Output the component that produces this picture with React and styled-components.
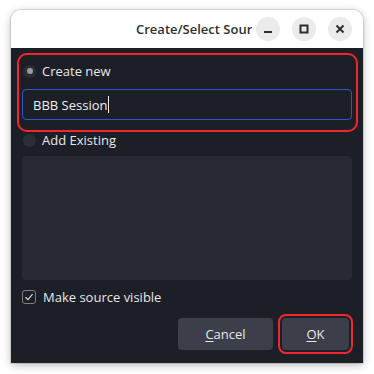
import React from "react";
import styled, { createGlobalStyle } from "styled-components";

const GlobalStyle = createGlobalStyle`
  html, body {
    margin: 0;
    padding: 0;
    background: #ffffff;
  }
  body {
    font-family: "Open Sans", "Noto Sans", sans-serif;
  }
`;

function Radio({ checked }) {
  return <RadioCircle>{checked && <RadioDot />}</RadioCircle>;
}

function App() {
  return (
    <Page>
      <GlobalStyle />
      <Window>
        <TitleBar>
          <Title>Create/Select Source</Title>
          <TitleButtons>
            <TitleButton>
              <svg width="10" height="10" viewBox="0 0 10 10">
                <rect x="1" y="7" width="8" height="2" fill="#2e2e2e" />
              </svg>
            </TitleButton>
            <TitleButton>
              <svg width="10" height="10" viewBox="0 0 10 10">
                <rect x="1.5" y="1.5" width="7" height="7" fill="none" stroke="#2e2e2e" strokeWidth="2" />
              </svg>
            </TitleButton>
            <TitleButton>
              <svg width="10" height="10" viewBox="0 0 10 10">
                <path d="M1.5 1.5 L8.5 8.5 M8.5 1.5 L1.5 8.5" stroke="#2e2e2e" strokeWidth="2" />
              </svg>
            </TitleButton>
          </TitleButtons>
        </TitleBar>
        <Content>
          <Highlight>
            <OptionRow>
              <Radio checked />
              <Label>Create new</Label>
            </OptionRow>
            <NameInput>
              BBB Session
              <Caret />
            </NameInput>
          </Highlight>
          <OptionRow>
            <Radio />
            <Label>Add Existing</Label>
          </OptionRow>
          <SourceList />
          <CheckRow>
            <CheckBox>
              <svg width="10" height="10" viewBox="0 0 10 10">
                <path d="M1.5 5.2 L4 7.6 L8.6 2.2" fill="none" stroke="#d8d9dc" strokeWidth="1.2" />
              </svg>
            </CheckBox>
            <Label>Make source visible</Label>
          </CheckRow>
          <ButtonRow>
            <Button $width={95}>
              <u>C</u>ancel
            </Button>
            <Button $width={67} $highlight>
              <u>O</u>K
            </Button>
          </ButtonRow>
        </Content>
      </Window>
    </Page>
  );
}

const Page = styled.div`
  width: 374px;
  height: 374px;
  padding: 10px 11px 0 11px;
  box-sizing: border-box;
`;

const Window = styled.div`
  width: 352px;
  height: 353px;
  border-radius: 10px 10px 0 0;
  overflow: hidden;
  display: flex;
  flex-direction: column;
  box-shadow: 0 0 0 1px rgba(0, 0, 0, 0.1), 0 2px 8px rgba(0, 0, 0, 0.28);
`;

const TitleBar = styled.div`
  height: 38px;
  flex-shrink: 0;
  background: #ffffff;
  display: flex;
  align-items: center;
  padding: 0 11px 0 125px;
  box-sizing: border-box;
`;

const Title = styled.div`
  flex: 1;
  min-width: 0;
  overflow: hidden;
  white-space: nowrap;
  font-size: 13px;
  font-weight: 600;
  color: #2e2e2e;
  margin-right: 4px;
`;

const TitleButtons = styled.div`
  display: flex;
  gap: 12px;
`;

const TitleButton = styled.div`
  width: 24px;
  height: 24px;
  border-radius: 50%;
  background: #ebebeb;
  display: flex;
  align-items: center;
  justify-content: center;
`;

const Content = styled.div`
  flex: 1;
  background: #1d1f26;
  padding: 5px 11px 13px 11px;
  display: flex;
  flex-direction: column;
  color: #e6e7ea;
`;

const Highlight = styled.div`
  margin: 0 -6px 0 -5px;
  border: 2px solid #f1272f;
  border-radius: 10px;
  padding: 8px 4px 10px 3px;
  display: flex;
  flex-direction: column;
  gap: 10px;
`;

const OptionRow = styled.div`
  display: flex;
  align-items: center;
  height: 16px;
  gap: 6px;
  padding-left: 1px;
`;

const RadioCircle = styled.div`
  width: 13px;
  height: 13px;
  border-radius: 50%;
  background: #2a2d35;
  display: flex;
  align-items: center;
  justify-content: center;
`;

const RadioDot = styled.div`
  width: 6px;
  height: 6px;
  border-radius: 50%;
  background: #9a9ca2;
`;

const Label = styled.span`
  font-size: 13px;
  color: #e6e7ea;
  line-height: 16px;
`;

const NameInput = styled.div`
  height: 31px;
  box-sizing: border-box;
  border: 1px solid #2f56c6;
  border-radius: 4px;
  background: #1d1f26;
  display: flex;
  align-items: center;
  padding-left: 10px;
  font-size: 13px;
  color: #eeeef0;
`;

const Caret = styled.span`
  display: inline-block;
  width: 1px;
  height: 17px;
  background: #eeeef0;
  margin-left: 1px;
`;

const SourceList = styled.div`
  margin-top: 8px;
  height: 124px;
  background: #272a33;
  border-radius: 4px;
`;

const CheckRow = styled.div`
  display: flex;
  align-items: center;
  gap: 7px;
  margin-top: 10px;
  height: 14px;
`;

const CheckBox = styled.div`
  width: 14px;
  height: 14px;
  box-sizing: border-box;
  border: 1px solid #7d8087;
  border-radius: 3px;
  display: flex;
  align-items: center;
  justify-content: center;
`;

const ButtonRow = styled.div`
  display: flex;
  justify-content: flex-end;
  gap: 9px;
  margin-top: auto;
  padding-right: 3px;
`;

const Button = styled.div`
  width: ${(p) => p.$width}px;
  height: 32px;
  border-radius: 4px;
  background: #3c3f4a;
  color: #e6e7ea;
  font-size: 13px;
  display: flex;
  align-items: center;
  justify-content: center;
  outline: ${(p) => (p.$highlight ? "2px solid #f1272f" : "none")};
  outline-offset: 2px;
  u {
    text-underline-offset: 2px;
  }
`;

export default App;
